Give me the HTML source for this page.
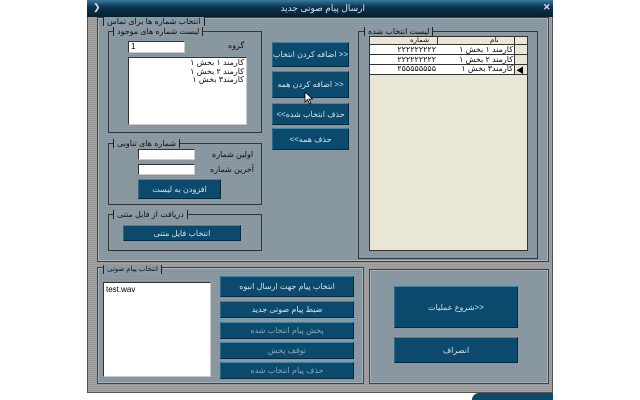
<!DOCTYPE html><html><head><meta charset="utf-8"><style>
*{margin:0;padding:0;box-sizing:border-box}
body{width:640px;height:400px;background:#fff;position:relative;overflow:hidden;font-family:"Liberation Sans","Noto Sans CJK SC",sans-serif;font-size:8px}
.a{position:absolute}
.win{left:87px;top:0;width:466px;height:393px;background:repeating-linear-gradient(#a3a3a3 0 1px,#989898 1px 2px);border:1px solid #555}
.title{left:87px;top:0;width:466px;height:17px;background:linear-gradient(#3a7a9e,#0c3550 40%,#061e2e);color:#d8e4ea;font-size:9px}
.pnl{background:repeating-linear-gradient(#8c9ba4 0 1px,#84939c 1px 2px);border:1px solid #3a4448;box-shadow:inset 0 0 0 1px #a8b4ba}
.grp{border:1px solid #30383c}
.lg{background:#8a99a2;padding:0 3px;border-left:1px solid #222;border-right:1px solid #222;font-size:8px;color:#111;white-space:nowrap;direction:rtl}
.btn{background:#0b4a6c;border-top:1px solid #3e86aa;border-left:1px solid #2c6a8c;border-bottom:1px solid #06283a;border-right:1px solid #06283a;color:#d4e2ea;display:flex;align-items:center;justify-content:center;font-size:8px;direction:rtl;white-space:nowrap}
.dis{color:#8aa6b8}
.inp{background:#fff;border:1px solid #333;border-right-color:#ccc;border-bottom-color:#ccc}
.t{color:#111;direction:rtl;white-space:nowrap}
</style></head><body>
<div class="a win"></div>
<div class="a title"><span class="a" style="left:6px;top:2px;font-size:9px">&#10095;</span><span class="a" style="left:150px;top:3px;width:128px;direction:rtl;text-align:right;white-space:nowrap">ارسال پیام صوتی جدید</span><span class="a" style="left:456px;top:2px;font-weight:bold">✕</span></div>

<div class="a pnl" style="left:97px;top:17px;width:452px;height:245px"></div>
<div class="a lg" style="left:103px;top:17px;height:9px;line-height:9px">انتخاب شماره ها برای تماس</div>

<div class="a grp" style="left:108px;top:31px;width:154px;height:102px"></div>
<div class="a lg" style="left:113px;top:27px;height:9px;line-height:9px">لیست شماره های موجود</div>
<div class="a t" style="left:228px;top:41px">گروه</div>
<div class="a inp" style="left:128px;top:41px;width:57px;height:12px;font-size:8px;padding-left:2px">1</div>
<div class="a inp" style="left:128px;top:57px;width:119px;height:68px"></div>
<div class="a t" style="left:196px;top:59px;line-height:8.5px;text-align:right;width:48px">کارمند ۱ بخش ۱<br>کارمند ۲ بخش ۱<br>کارمند۳ بخش ۱</div>

<div class="a btn" style="left:272px;top:42px;width:77px;height:25px">&lt;&lt; اضافه کردن انتخاب</div>
<div class="a btn" style="left:272px;top:71px;width:77px;height:27px">&lt;&lt; اضافه کردن همه</div>
<div class="a btn" style="left:272px;top:103px;width:77px;height:22px">حذف انتخاب شده&gt;&gt;</div>
<div class="a btn" style="left:272px;top:128px;width:77px;height:22px">حذف همه&gt;&gt;</div>
<svg class="a" style="left:304px;top:91px" width="10" height="14" viewBox="0 0 10 14"><path d="M1 1 L1 11 L3.5 8.5 L5.5 13 L7 12.3 L5 8 L8.5 8 Z" fill="#fff" stroke="#000" stroke-width="0.8"/></svg>

<div class="a grp" style="left:108px;top:143px;width:154px;height:62px"></div>
<div class="a lg" style="left:113px;top:139px;height:9px;line-height:9px">شماره های تناوبی</div>
<div class="a inp" style="left:138px;top:149px;width:57px;height:11px"></div>
<div class="a inp" style="left:138px;top:164px;width:57px;height:11px"></div>
<div class="a t" style="left:212px;top:150px">اولین شماره</div>
<div class="a t" style="left:210px;top:165px">آخرین شماره</div>
<div class="a btn" style="left:138px;top:179px;width:83px;height:20px">افزودن به لیست</div>

<div class="a grp" style="left:108px;top:214px;width:154px;height:37px"></div>
<div class="a lg" style="left:113px;top:210px;height:9px;line-height:9px">دریافت از فایل متنی</div>
<div class="a btn" style="left:123px;top:225px;width:118px;height:16px">انتخاب فایل متنی</div>

<div class="a grp" style="left:358px;top:31px;width:180px;height:228px"></div>
<div class="a lg" style="left:364px;top:27px;height:9px;line-height:9px">لیست انتخاب شده</div>
<div class="a" style="left:369px;top:36px;width:159px;height:215px;background:#e9e6d6;border:1px solid #333"></div>
<div class="a" style="left:370px;top:37px;width:157px;height:8px;border-bottom:1px solid #333"></div>
<div class="a" style="left:437px;top:37px;width:1px;height:37px;background:#333"></div>
<div class="a" style="left:514px;top:37px;width:1px;height:37px;background:#333"></div>
<div class="a" style="left:370px;top:45px;width:144px;height:29px;background:#fff"></div>
<div class="a" style="left:370px;top:54px;width:157px;height:1px;background:#333"></div>
<div class="a" style="left:370px;top:64px;width:157px;height:1px;background:#333"></div>
<div class="a" style="left:370px;top:74px;width:157px;height:1px;background:#333"></div>
<div class="a t" style="left:490px;top:37px;font-size:7px;line-height:8px">نام</div>
<div class="a t" style="left:410px;top:37px;font-size:7px;line-height:8px">شماره</div>
<div class="a t" style="left:440px;top:45px;width:73px;text-align:right;line-height:9.7px">کارمند ۱ بخش ۱<br>کارمند ۲ بخش ۱<br>کارمند۳ بخش ۱</div>
<div class="a t" style="left:372px;top:45px;width:64px;text-align:right;line-height:9.7px;direction:ltr">۲۲۲۲۲۲۲۲۲<br>۲۲۲۲۲۲۲۲۲<br>۲۵۵۵۵۵۵۵۵</div>
<div class="a" style="left:516px;top:65px;font-size:8px">◀</div>

<div class="a pnl" style="left:97px;top:267px;width:267px;height:117px"></div>
<div class="a lg" style="left:103px;top:265px;height:9px;line-height:9px;font-size:7px">انتخاب پیام صوتی</div>
<div class="a inp" style="left:103px;top:282px;width:108px;height:95px;padding:2px;font-size:8px">test.wav</div>
<div class="a btn" style="left:220px;top:276px;width:134px;height:21px">انتخاب پیام جهت ارسال انبوه</div>
<div class="a btn" style="left:220px;top:301px;width:134px;height:17px">ضبط پیام صوتی جدید</div>
<div class="a btn dis" style="left:220px;top:322px;width:134px;height:17px">پخش پیام انتخاب شده</div>
<div class="a btn dis" style="left:220px;top:342px;width:134px;height:17px">توقف پخش</div>
<div class="a btn dis" style="left:220px;top:362px;width:134px;height:17px">حذف پیام انتخاب شده</div>

<div class="a pnl" style="left:369px;top:269px;width:180px;height:115px"></div>
<div class="a btn" style="left:394px;top:286px;width:124px;height:42px">&lt;&lt;شروع عملیات</div>
<div class="a btn" style="left:394px;top:337px;width:124px;height:26px">انصراف</div>

<div class="a" style="left:472px;top:393px;width:81px;height:7px;background:#0c4a6c;border-top-left-radius:8px"></div>
</body></html>
